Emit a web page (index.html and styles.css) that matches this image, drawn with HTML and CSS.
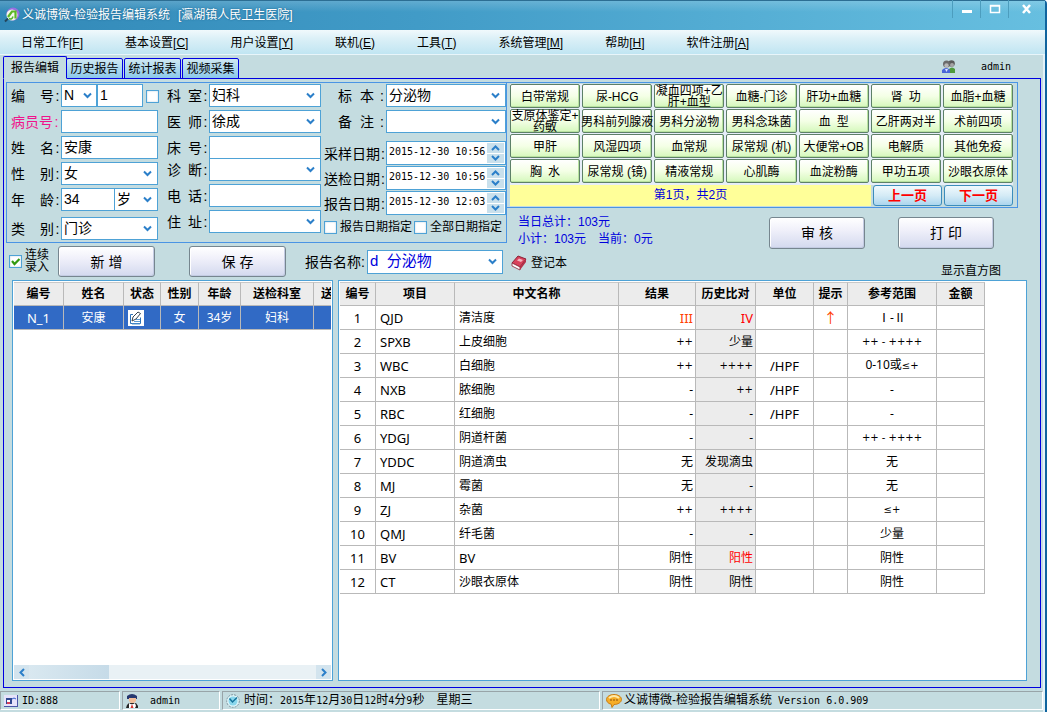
FILE: index.html
```html
<!DOCTYPE html>
<html lang="zh-CN">
<head>
<meta charset="utf-8">
<title>义诚博微-检验报告编辑系统</title>
<link rel="stylesheet" href="styles.css">
</head>
<body>
<div class="window">
  <header class="titlebar">
    <svg class="logo" width="16" height="16" viewBox="0 0 16 16"><circle cx="9" cy="7" r="6.500" fill="#9a6fe0"/><circle cx="8" cy="8" r="5.500" fill="#f4f8ec"/><path d="M4 10 8 4.500h3.500v7" fill="none" stroke="#5cb825" stroke-width="2.200"/><path d="M1 14.500 4 11.500" stroke="#24465c" stroke-width="2"/><path d="M5 11.500q3 1.500 4-2" fill="none" stroke="#58b330" stroke-width="1.500"/></svg>
    <h1 class="title">义诚博微-检验报告编辑系统</h1><span class="org">[瀛湖镇人民卫生医院]</span>
    <div class="win-buttons">
      <button aria-label="最小化"><svg width="12" height="12"><path d="M1 8.500h10" stroke="#fff" stroke-width="3"/></svg></button>
      <button aria-label="最大化"><svg width="12" height="12"><path d="M1.500 2.500h9v7h-9zM1 3h10" fill="none" stroke="#fff" stroke-width="1.500"/></svg></button>
      <button class="close" aria-label="关闭"><svg width="12" height="12"><path d="M2 2l7 8M9 2l-7 8" stroke="#fff" stroke-width="2.500"/></svg></button>
    </div>
  </header>
  <nav class="menubar">
    <button>日常工作[<u>F</u>]</button><button>基本设置[<u>C</u>]</button><button>用户设置[<u>Y</u>]</button><button>联机(<u>E</u>)</button><button>工具(<u>T</u>)</button><button>系统管理[<u>M</u>]</button><button>帮助[<u>H</u>]</button><button>软件注册[<u>A</u>]</button>
  </nav>
  <main class="body">
    <div class="tabrow">
      <button class="tab active">报告编辑</button><button class="tab">历史报告</button><button class="tab">统计报表</button><button class="tab">视频采集</button>
      <div class="user">
        <svg width="14" height="14" viewBox="0 0 14 14"><circle cx="9.500" cy="3.500" r="3.300" fill="#5a5a5a"/><circle cx="10" cy="5" r="2" fill="#a5a5a5"/><path d="M7 13V9q3-3 6 0v4z" fill="#4f9a3c"/><circle cx="4.500" cy="4" r="3.500" fill="#6a6a6a"/><circle cx="4.500" cy="5.500" r="2.200" fill="#b8b8b8"/><path d="M0 13V10q4-4 8 0v3z" fill="#4a66d8"/><path d="M3 9l1.500 3L6 9z" fill="#dfe6ff"/></svg>
        <span class="mono">admin</span>
      </div>
    </div>
    <section class="page">
      <div class="top">
        <div class="editor">
          <form class="form">
            <div class="col col1">
              <div class="row"><label for="no"><span>编</span><span>号</span><i>:</i></label><select class="prefix" aria-label="编号前缀"><option>N</option></select><input id="no" class="no" value="1"><input type="checkbox" class="check side" aria-label="锁定编号"></div>
              <div class="row"><label for="pid" class="pink">病员号<i>:</i></label><input id="pid"></div>
              <div class="row"><label for="name"><span>姓</span><span>名</span><i>:</i></label><input id="name" value="安康"></div>
              <div class="row"><label for="sex"><span>性</span><span>别</span><i>:</i></label><select id="sex"><option>女</option></select></div>
              <div class="row"><label for="age"><span>年</span><span>龄</span><i>:</i></label><input id="age" class="age" value="34"><select class="unit" aria-label="年龄单位"><option>岁</option></select></div>
              <div class="row last"><label for="type"><span>类</span><span>别</span><i>:</i></label><select id="type"><option>门诊</option></select></div>
            </div>
            <div class="col col2">
              <div class="row"><label for="dept"><span>科</span><span>室</span><i>:</i></label><select id="dept"><option>妇科</option></select></div>
              <div class="row"><label for="doc"><span>医</span><span>师</span><i>:</i></label><select id="doc"><option>徐成</option></select></div>
              <div class="row tight"><label for="bed"><span>床</span><span>号</span><i>:</i></label><input id="bed"></div>
              <div class="row"><label for="diag"><span>诊</span><span>断</span><i>:</i></label><select id="diag"><option></option></select></div>
              <div class="row"><label for="tel"><span>电</span><span>话</span><i>:</i></label><input id="tel"></div>
              <div class="row"><label for="addr"><span>住</span><span>址</span><i>:</i></label><select id="addr"><option></option></select></div>
            </div>
            <div class="col col3">
              <div class="row short"><label for="spec"><span>标</span><span>本</span><i>:</i></label><select id="spec"><option>分泌物</option></select></div>
              <div class="row short"><label for="memo"><span>备</span><span>注</span><i>:</i></label><select id="memo"><option></option></select></div>
              <div class="dates">
                <div class="row date"><label for="d1">采样日期<i>:</i></label><div class="spin"><input id="d1" value="2015-12-30 10:56"><div class="arrows"><button type="button" aria-label="增加"><svg width="9" height="6"><path d="M1 5l3.500-3.500L8 5" /></svg></button><button type="button" aria-label="减少"><svg width="9" height="6"><path d="M1 1l3.500 3.500L8 1" /></svg></button></div></div></div>
                <div class="row date"><label for="d2">送检日期<i>:</i></label><div class="spin"><input id="d2" value="2015-12-30 10:56"><div class="arrows"><button type="button" aria-label="增加"><svg width="9" height="6"><path d="M1 5l3.500-3.500L8 5" /></svg></button><button type="button" aria-label="减少"><svg width="9" height="6"><path d="M1 1l3.500 3.500L8 1" /></svg></button></div></div></div>
                <div class="row date"><label for="d3">报告日期<i>:</i></label><div class="spin"><input id="d3" value="2015-12-30 12:03"><div class="arrows"><button type="button" aria-label="增加"><svg width="9" height="6"><path d="M1 5l3.500-3.500L8 5" /></svg></button><button type="button" aria-label="减少"><svg width="9" height="6"><path d="M1 1l3.500 3.500L8 1" /></svg></button></div></div></div>
              </div>
              <div class="checks"><label><input type="checkbox" class="check">报告日期指定</label><label><input type="checkbox" class="check">全部日期指定</label></div>
            </div>
          </form>
          <div class="actions">
            <input type="checkbox" class="check" id="cont" checked><label for="cont" class="two">连续<br>录入</label>
            <button class="big new">新 增</button>
            <button class="big save">保 存</button>
            <label for="rname" class="rlabel">报告名称<i>:</i></label>
            <select id="rname" class="rname"><option>d&nbsp; 分泌物</option></select>
          </div>
        </div>
        <div class="side-panel">
          <div class="presets">
            <div class="preset-grid">
              <button>白带常规</button><button>尿-HCG</button><button class="wrap">凝血四项+乙<br>肝+血型</button><button>血糖-门诊</button><button>肝功+血糖</button><button>肾&ensp;功</button><button>血脂+血糖</button>
              <button class="wrap">支原体鉴定+<br>药敏</button><button>男科前列腺液</button><button>男科分泌物</button><button>男科念珠菌</button><button>血&ensp;型</button><button>乙肝两对半</button><button>术前四项</button>
              <button>甲肝</button><button>风湿四项</button><button>血常规</button><button>尿常规 (机)</button><button>大便常+OB</button><button>电解质</button><button>其他免疫</button>
              <button>胸&ensp;水</button><button>尿常规 (镜)</button><button>精液常规</button><button>心肌酶</button><button>血淀粉酶</button><button>甲功五项</button><button>沙眼衣原体</button>
            </div>
            <div class="pager"><span>第1页，共2页</span><button>上一页</button><button>下一页</button></div>
          </div>
          <div class="stats">
            <div class="totals"><p>当日总计：103元</p><p>小计：103元&emsp;当前：0元</p></div>
            <button class="big">审 核</button><button class="big">打 印</button>
          </div>
          <div class="links">
            <button class="book"><svg width="16" height="16" viewBox="0 0 16 16"><path d="M1 8 7 1l8 3-6 8z" fill="#d8425c" stroke="#8c2237"/><path d="M1 8v3l8 4v-3z" fill="#fff" stroke="#8c2237" stroke-width=".8"/><path d="M9 15l6-8V4l-6 8z" fill="#b52f48"/><path d="M6 5.500l2-2 4 1.500-2 2z" fill="#f7b4bf"/></svg>登记本</button>
            <button class="hist">显示直方图</button>
          </div>
        </div>
      </div>
      <div class="grids">
        <div class="grid patients">
          <div class="clip">
            <table>
              <colgroup><col class="w50"><col class="w60"><col class="w37"><col class="w38"><col class="w42"><col class="w73"><col class="w60"></colgroup>
              <thead><tr><th>编号</th><th>姓名</th><th>状态</th><th>性别</th><th>年龄</th><th>送检科室</th><th>送</th></tr></thead>
              <tbody><tr class="sel"><td class="lat">N_1</td><td>安康</td><td class="state"><svg width="16" height="16" viewBox="0 0 16 16"><path d="M0 0h16v16H0z" fill="#fff"/><path d="M5 4.500H2.500v9h10v-6" fill="none" stroke="#2d73b8"/><path d="M4 11l1-4 5-5 2.500 1.500L8 9z" fill="#fff" stroke="#33424f"/><path d="M4 14h8M8 9.500h4M6 11.500h6" stroke="#5b9bd5"/></svg></td><td>女</td><td>34岁</td><td>妇科</td><td></td></tr></tbody>
            </table>
          </div>
          <div class="hscroll"><button aria-label="向左"><svg width="6" height="9"><path d="M5 1L1.500 4.500 5 8"/></svg></button><div class="thumb"></div><button aria-label="向右"><svg width="6" height="9"><path d="M1 1l3.500 3.500L1 8"/></svg></button></div>
        </div>
        <div class="grid results">
          <table>
            <colgroup><col class="w36"><col class="w79"><col class="w164"><col class="w77"><col class="w60"><col class="w58"><col class="w34"><col class="w89"><col class="w48"></colgroup>
            <thead><tr><th>编号</th><th>项目</th><th>中文名称</th><th>结果</th><th>历史比对</th><th>单位</th><th>提示</th><th>参考范围</th><th>金额</th></tr></thead>
            <tbody>
              <tr><td>1</td><td>QJD</td><td>清洁度</td><td class="lat hi">III</td><td class="lat red">IV</td><td></td><td class="hi arrow">↑</td><td>Ⅰ-Ⅱ</td><td></td></tr>
              <tr><td>2</td><td>SPXB</td><td>上皮细胞</td><td class="sign">++</td><td>少量</td><td></td><td></td><td class="sign">++ - ++++</td><td></td></tr>
              <tr><td>3</td><td>WBC</td><td>白细胞</td><td class="sign">++</td><td class="sign">++++</td><td>/HPF</td><td></td><td>0-10或<span class="sign">≤+</span></td><td></td></tr>
              <tr><td>4</td><td>NXB</td><td>脓细胞</td><td>-</td><td class="sign">++</td><td>/HPF</td><td></td><td>-</td><td></td></tr>
              <tr><td>5</td><td>RBC</td><td>红细胞</td><td>-</td><td>-</td><td>/HPF</td><td></td><td>-</td><td></td></tr>
              <tr><td>6</td><td>YDGJ</td><td>阴道杆菌</td><td>-</td><td>-</td><td></td><td></td><td class="sign">++ - ++++</td><td></td></tr>
              <tr><td>7</td><td>YDDC</td><td>阴道滴虫</td><td>无</td><td>发现滴虫</td><td></td><td></td><td>无</td><td></td></tr>
              <tr><td>8</td><td>MJ</td><td>霉菌</td><td>无</td><td>-</td><td></td><td></td><td>无</td><td></td></tr>
              <tr><td>9</td><td>ZJ</td><td>杂菌</td><td class="sign">++</td><td class="sign">++++</td><td></td><td></td><td class="sign">≤+</td><td></td></tr>
              <tr><td>10</td><td>QMJ</td><td>纤毛菌</td><td>-</td><td>-</td><td></td><td></td><td>少量</td><td></td></tr>
              <tr><td>11</td><td>BV</td><td class="lat">BV</td><td>阴性</td><td class="red">阳性</td><td></td><td></td><td>阴性</td><td></td></tr>
              <tr><td>12</td><td>CT</td><td>沙眼衣原体</td><td>阴性</td><td>阴性</td><td></td><td></td><td>阴性</td><td></td></tr>
            </tbody>
          </table>
        </div>
      </div>
    </section>
    <footer class="status">
      <div class="cell s1"><svg width="14" height="12" viewBox="0 0 14 12"><path d="M0 0h14v12H0z" fill="#e6e2fa"/><path d="M0 11.500h14M13.500 0v12" stroke="#4a55a8"/><path d="M2 3h6v6H2z" fill="#304890"/><path d="M3 5h3v2H3z" fill="#fff"/><path d="M3 7h3v2H3z" fill="#d8405c"/><path d="M8 4q2-2 4 0" fill="none" stroke="#335fd0"/></svg><span class="mono">ID:888</span></div>
      <div class="cell s2"><svg width="12" height="14" viewBox="0 0 12 14"><path d="M1 2q5-4 10 0v3H1z" fill="#26386f"/><path d="M3 4h7v3l-2 2H5L3 7z" fill="#f1bd98"/><path d="M0 14h4l-1-4H9l-1 4h4v-2l-2-3H3L1 11z" fill="#252525"/><path d="M3 9l3 2 3-2 1 3-1 2H3z" fill="#fff"/><path d="M6 10l1.500 4h-3z" fill="#d5322d"/></svg><span class="mono">admin</span></div>
      <div class="cell s3"><svg width="14" height="14" viewBox="0 0 14 14"><circle cx="7" cy="7" r="6.300" fill="#dff6fa" stroke="#7d939c" stroke-dasharray="2 1"/><circle cx="7" cy="7" r="4.500" fill="#8bd7ec"/><path d="M3.500 4.500 6.500 8 11 3.500" fill="none" stroke="#14739b" stroke-width="1.500"/></svg><span>时间：<span class="mono">2015</span>年<span class="mono">12</span>月<span class="mono">30</span>日<span class="mono">12</span>时<span class="mono">4</span>分<span class="mono">9</span>秒&emsp;星期三</span></div>
      <div class="cell s4"><svg width="16" height="14" viewBox="0 0 16 14"><path d="M8 .5c4.200 0 7.500 2.200 7.500 5S12 10.500 8 10.500l-2 3-.8-3.300C2 9.600.5 7.500.5 5.500c0-2.800 3.300-5 7.500-5z" fill="#f6ae28" stroke="#c97c12"/><path d="M3 4q5-4 10 0" fill="none" stroke="#ffe9a8" stroke-width="2"/><path d="M4 6h2M7 6h2M10 6h2" stroke="#8c500a"/></svg><span>义诚博微-检验报告编辑系统&ensp;<span class="mono">Version 6.0.909</span></span></div>
    </footer>
  </main>
</div>
</body>
</html>
```
FILE: styles.css
```css
* { box-sizing: border-box; }
body { margin: 0; font: 12px/16px "Liberation Sans", "Noto Sans CJK SC", sans-serif; color: #000; }
button, input, select { font: inherit; color: inherit; margin: 0; padding: 0; border: 0; background: none; border-radius: 0; white-space: nowrap; }
h1, p { margin: 0; font: inherit; }
i { font-style: normal; }
svg { display: block; flex: none; }
.mono { font-family: "DejaVu Sans Mono", monospace; font-size: 10px; }

.window { min-height: 100vh; display: flex; flex-direction: column; background: #e2f1f8; border-right: 2px solid #10649e; border-radius: 4px 4px 0 0; }
.titlebar { height: 30px; display: flex; align-items: center; padding-left: 4px; color: #fff; background: linear-gradient(180deg, #ffffff30, #ffffff00 12px), linear-gradient(90deg, #3289b8, #419bc7 40%, #67bfe0); box-shadow: inset 0 1px #2c6e93; }
.title, .org { text-shadow: 0 0 2px #1b5f86; }
.title { margin-left: 2px; }
.org { margin-left: 8px; }
.win-buttons { margin-left: auto; align-self: flex-start; display: flex; }
.win-buttons button { width: 28px; height: 18px; display: flex; justify-content: center; align-items: center; border-left: 1px solid #4c9dbe; }
.win-buttons .close { width: 37px; }
.menubar { height: 25px; display: flex; padding: 1px 0 0 21px; gap: 42px; background: linear-gradient(#f1f9fc, #dcf0f7 35%, #c0e5f2); border-bottom: 1px solid #e8f5fa; }

.body { flex: 1; display: flex; flex-direction: column; margin-right: 2px; background: #c4dce0; }
.tabrow { height: 24px; display: flex; align-items: flex-end; padding-left: 3px; margin-bottom: -1px; gap: 1px; }
.tab { height: 21px; width: 57px; border: 1px solid #0000e0; border-radius: 2px 2px 0 0; background: linear-gradient(#cfe8f2, #8cc9ea); }
.tab.active { width: 64px; height: 23px; background: #c4dce0; border-bottom-color: #c4dce0; margin-right: -2px; z-index: 1; }
.user { margin: 0 32px 4px auto; display: flex; align-items: center; gap: 25px; }

.page { flex: 1; display: flex; flex-direction: column; margin: 0 2px 3px 3px; border: 1px solid #0000e0; }
.top { display: flex; padding: 3px 0 0 2px; }
.editor { width: 501px; flex: none; }
.form { display: flex; border: 1px solid #4a94e4; padding: 1px 0 2px 3px; font-size: 14px; }
.col { display: flex; flex-direction: column; gap: 3px; }
.col1 { width: 148px; margin-right: 8px; }
.col2 { width: 155px; margin-right: 2px; }
.col3 { flex: 1; min-width: 0; }
.row { display: flex; height: 23px; }
.row > label { display: flex; align-items: center; flex: none; padding: 1px 0 0 1px; white-space: nowrap; }
.row > label span:first-child { margin-right: auto; }
.row > label i { width: 7px; text-align: center; }
.col1 .row > label { width: 51px; }
.col2 .row > label { width: 43px; }
.col3 .row > label { width: 63px; }
.col3 .date > label i { width: 6px; }
.col3 .short > label { padding-left: 15px; }
.col3 .short > label i { width: 12px; text-align: right; padding-right: 2px; }
.pink { color: #f0148c; }
.last { margin-top: 3px; }
.tight { margin-bottom: -4px; }
.row > input:not(.check), .row > select, .spin, .rname { flex: 1; min-width: 0; border: 1px solid #4ea2d6; background-color: #fff; padding: 0 2px 2px; }
select { appearance: none; background: #fff url("data:image/svg+xml,%3Csvg xmlns='http://www.w3.org/2000/svg' width='9' height='7'%3E%3Cpath d='M1 1.500l3.500 3.500L8 1.500' fill='none' stroke='%232b7fc9' stroke-width='2'/%3E%3C/svg%3E") no-repeat right 5px center; }
.row > .prefix { flex: none; width: 36px; background-position: right 4px center; }
.row > input.no:not(.check) { flex: none; width: 46px; }
.side { margin: 6px 0 0 3px; }
.row > input.age:not(.check) { flex: none; width: 54px; }
.row > .unit { margin-left: -1px; }
.check { appearance: none; flex: none; width: 13px; height: 13px; border: 1px solid #4ea2d6; background: #fff; box-shadow: inset 0 0 2px #b8cfdd; }
.check:checked { background: #fff url("data:image/svg+xml,%3Csvg xmlns='http://www.w3.org/2000/svg' width='11' height='11'%3E%3Cpath d='M2 5l2.500 3L9.500 3' fill='none' stroke='%23339a10' stroke-width='2.200'/%3E%3C/svg%3E") center no-repeat; }
.dates { margin-top: 5px; display: flex; flex-direction: column; gap: 1px; }
.date { height: 24px; }
.spin { display: flex; padding: 0 1px 0 0; }
.spin input { flex: 1; min-width: 0; padding: 0 0 3px 2px; font: 10px "DejaVu Sans Mono", monospace; }
.arrows { width: 17px; display: flex; flex-direction: column; gap: 1px; padding: 1px 0; }
.arrows button { flex: 1; display: flex; justify-content: center; align-items: center; background: #c9e0ec; }
.arrows path, .hscroll path { fill: none; stroke: #2b7fc9; stroke-width: 2; }
.checks { display: flex; gap: 2px; font-size: 12px; margin: 1px 0 0 1px; }
.checks label { display: flex; gap: 3px; align-items: center; white-space: nowrap; }

.actions { height: 37px; display: flex; align-items: center; padding: 0 4px 0 3px; }
.two { line-height: 12px; margin: 0 0 2px 3px; width: 33px; }
.big { width: 97px; height: 31px; font-size: 14px; border: 1px solid #76868f; border-radius: 3px; background: linear-gradient(#fff, #f0f0fa 40%, #d3d9ee); box-shadow: inset 1px 1px #fff, inset -1px -1px #c3cbe2; }
.new { margin-right: 34px; }
.rlabel { display: flex; justify-content: space-between; width: 62px; margin-left: 19px; padding-right: 2px; font-size: 14px; }
.rname { flex: none; width: 136px; height: 24px; font-size: 15px; color: #00d; }

.side-panel { flex: 1; min-width: 0; display: flex; flex-direction: column; }
.presets { border: 1px solid #4a94e4; border-left: 0; margin-right: 22px; padding: 1px 4px 1px 3px; }
.preset-grid { display: grid; grid-template-columns: repeat(7, 1fr); gap: 1px 2px; background: #e6eef8; padding-bottom: 2px; }
.preset-grid button { height: 24px; min-width: 0; display: flex; justify-content: center; align-items: center; padding-top: 2px; border: 1px solid #5d8068; border-radius: 2px; background: linear-gradient(#fff, #f4ffe6 50%, #d5f8bc); box-shadow: inset -1px -1px #b8e2a0; }
.preset-grid .wrap { line-height: 11px; }
.pager { display: flex; gap: 2px; }
.pager span { flex: 1; text-align: center; color: #00d; background: #ffff99; padding: 2px 0; }
.pager button { width: 69px; height: 21px; font-weight: bold; font-size: 13px; color: #f00; border: 1px solid #3c8dbb; border-radius: 3px; background: linear-gradient(#f0f9fd, #d5ebf6 50%, #acd6ee); }
.stats { display: flex; align-items: flex-start; padding: 9px 46px 0 11px; }
.stats .big { height: 32px; width: 96px; }
.stats .big + .big { margin-left: 33px; }
.totals { flex: 1; color: #00d; line-height: 17px; margin-top: -3px; white-space: nowrap; }
.links { display: flex; justify-content: space-between; align-items: flex-start; padding: 6px 39px 0 4px; }
.book { display: flex; align-items: center; gap: 4px; }
.hist { margin-top: 9px; line-height: 14px; }

.grids { flex: 1; display: flex; gap: 5px; padding: 0 13px 6px 8px; }
.grid { background: #fff; border: 1px solid #4ea2d6; padding: 1px; overflow: hidden; }
.patients { width: 321px; flex: none; display: flex; flex-direction: column; }
.clip { flex: 1; overflow: hidden; }
.results { flex: 1; min-width: 0; }
table { table-layout: fixed; border-collapse: separate; border-spacing: 0; width: 0; }
th, td { height: 24px; padding: 0; text-align: center; border: solid #b9b9b9; border-width: 0 1px 1px 0; white-space: nowrap; overflow: hidden; }
th { background: #ececec; font-weight: bold; border-top: 1px solid #c8c8c8; }
.w34 { width: 34px; } .w36 { width: 36px; } .w37 { width: 37px; } .w38 { width: 38px; } .w42 { width: 42px; }
.w48 { width: 48px; } .w50 { width: 50px; } .w58 { width: 58px; } .w60 { width: 60px; } .w73 { width: 73px; }
.w77 { width: 77px; } .w79 { width: 79px; } .w89 { width: 89px; } .w164 { width: 164px; }
.patients th:last-child { text-align: left; padding-left: 7px; }
.sel td { background: #316ac5; color: #fff; }
.state { padding-left: 4px; }
td { font-family: "Noto Sans", "Noto Sans CJK SC", sans-serif; }
.lat, .results td:nth-child(-n+2), .results td:nth-child(6) { font-size: 13px; line-height: 14px; }
.results td:nth-child(2), .results td:nth-child(3) { text-align: left; padding-left: 4px; }
.results td:nth-child(4), .results td:nth-child(5) { text-align: right; padding-right: 2px; }
.results td:nth-child(5) { background: #ececec; }
.results .sign { font-family: "DejaVu Sans", sans-serif; font-size: 10px; }
.results .arrow { font-size: 14px; }
.results .hi { color: #ff4000; }
.results .red { color: #f00; }
.hscroll { height: 14px; display: flex; background: #e9f1f5; }
.hscroll button { width: 15px; display: flex; justify-content: center; align-items: center; background: #d3e4ee; }
.thumb { width: 80px; margin-right: auto; background: linear-gradient(90deg, #d9e8f0, #c6dbe8); }

.status { display: flex; gap: 2px; margin-bottom: 2px; }
.cell { height: 19px; display: flex; align-items: center; gap: 4px; padding-left: 3px; border: 1px solid; border-color: #98a4a8 #fff #fff #98a4a8; white-space: nowrap; }
.s1 { width: 120px; }
.s2 { width: 98px; gap: 12px; }
.s3 { width: 378px; }
.s4 { flex: 1; gap: 2px; }
```
